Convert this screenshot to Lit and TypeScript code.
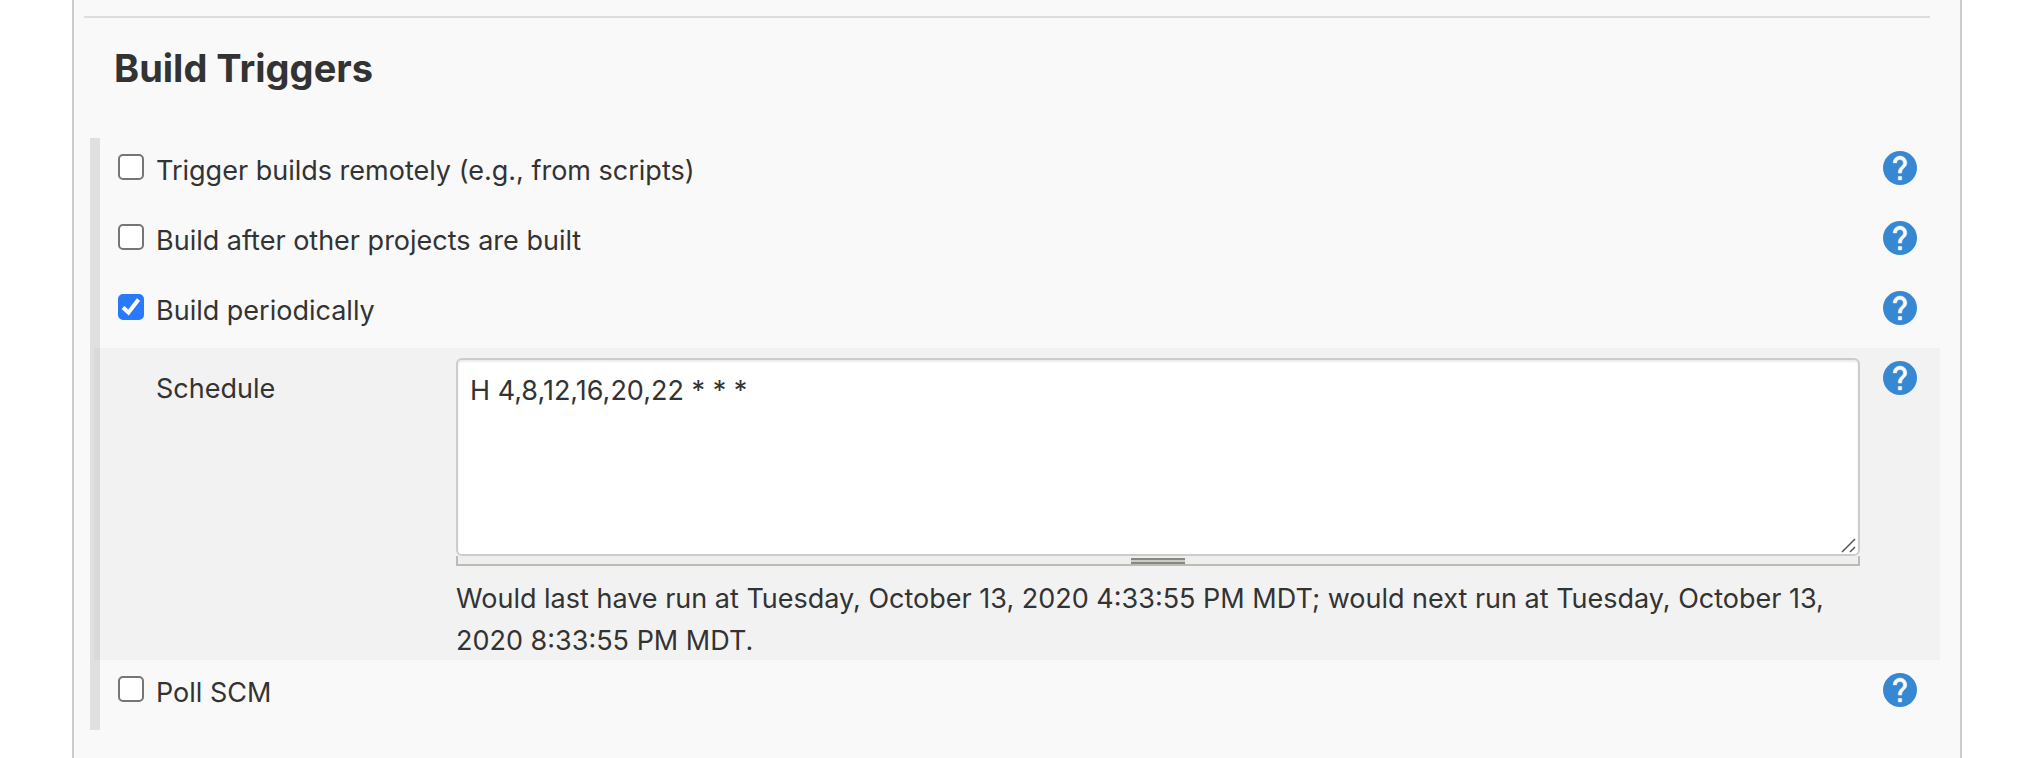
import { LitElement, html, css } from "lit";
import { customElement, property, state } from "lit/decorators.js";

@customElement("help-button")
class HelpButton extends LitElement {
  @property() topic = "";

  static styles = css`
    :host { display: block; }
    .help {
      display: block;
      width: 34px;
      height: 34px;
      padding: 0;
      border: 0;
      background: none;
      cursor: pointer;
    }
    .icon { display: block; width: 34px; height: 34px; }
  `;

  render() {
    return html`<button class="help" type="button" aria-label="Help for feature: ${this.topic}">
      <svg class="icon" viewBox="2 2 20 20" aria-hidden="true">
        <circle cx="12" cy="12" r="10" fill="#3788d2"/>
        <path fill="#f9f9f9" stroke="#f9f9f9" stroke-width="0.300" d="M13 19h-2v-2h2v2zm2.070-7.750l-.9.920C13.450 12.900 13 13.500 13 15h-2v-.5c0-1.100.450-2.100 1.170-2.830l1.240-1.260c.370-.360.590-.860.590-1.410 0-1.100-.9-2-2-2s-2 .9-2 2H8c0-2.210 1.790-4 4-4s4 1.790 4 4c0 .880-.360 1.680-.930 2.250z"/>
      </svg>
    </button>`;
  }
}

@customElement("app-root")
class AppRoot extends LitElement {
  @state() private checked: Record<string, boolean> = { periodic: true };

  static styles = css`
    :host {
      display: block;
      min-height: 100vh;
      background: #fff;
      color: #333;
      font-family: Inter, "Liberation Sans", sans-serif;
      font-size: 27px;
      line-height: 42px;
    }
    * { box-sizing: border-box; }
    .panel {
      min-height: 100vh;
      margin: 0 64px 0 72px;
      padding: 16px 20px 28px 10px;
      border: solid #ccc;
      border-width: 0 2px;
      background: #f9f9f9;
    }
    .rule {
      height: 2px;
      margin: 0 10px 0 0;
      border: 0;
      background: #ddd;
    }
    .title {
      margin: 0;
      padding: 26px 30px 46px;
      font-size: 38px;
      line-height: 48px;
      font-weight: 700;
    }
    .triggers {
      margin-left: 6px;
      border-left: 10px solid #e0e0e0;
    }
    .row {
      display: flex;
      align-items: flex-start;
      justify-content: space-between;
      min-height: 70px;
      padding: 12px 23px 0 18px;
    }
    .option {
      display: flex;
      align-items: flex-start;
      gap: 12px;
    }
    .box {
      appearance: none;
      flex: none;
      width: 26px;
      height: 26px;
      margin: 4px 0 0;
      border: 2px solid #767676;
      border-radius: 5px;
      background: #fff;
    }
    .box:checked {
      border-color: #2979ff;
      background: #2979ff url('data:image/svg+xml,<svg xmlns="http://www.w3.org/2000/svg" viewBox="0 0 26 26"><path d="M5 13.500L10.500 18.500L20.500 5.500" fill="none" stroke="white" stroke-width="4"/></svg>') border-box center / 26px 26px;
    }
    .row help-button { margin-top: 1px; }
    .schedule {
      display: grid;
      grid-template-columns: 300px minmax(0, 1fr) 34px;
      align-items: start;
      margin-left: -6px;
      padding: 10px 23px 0 62px;
      background: rgba(0, 0, 0, 0.027);
    }
    .label { padding-top: 10px; }
    .field { margin-right: 23px; }
    .schedule help-button { margin-top: 3px; }
    .editor { position: relative; }
    .text {
      display: block;
      width: 100%;
      height: 198px;
      padding: 10px 12px;
      border: 2px solid #ccc;
      border-radius: 6px;
      background: #fff;
      box-shadow: inset 0 2px 2px rgba(0, 0, 0, 0.075);
      color: inherit;
      font: inherit;
      resize: none;
      outline: 0;
    }
    .corner {
      position: absolute;
      right: 4px;
      bottom: 3px;
      width: 15px;
      height: 15px;
      pointer-events: none;
    }
    .handle {
      display: flex;
      justify-content: center;
      height: 10px;
      padding-top: 2px;
      border: solid #bbbbb3;
      border-width: 0 2px 2px;
      background: #eee;
    }
    .grip {
      width: 54px;
      height: 6px;
      border: solid #888880;
      border-width: 2px 0;
      background: #ccccc6;
    }
    .message { margin: 12px 0 -2px; }
  `;

  private row(id: string, text: string) {
    return html`<div class="row">
      <label class="option">
        <input class="box" type="checkbox" .checked=${!!this.checked[id]}
          @change=${(e: Event) => {
            this.checked = { ...this.checked, [id]: (e.target as HTMLInputElement).checked };
          }}>
        <span>${text}</span>
      </label>
      <help-button topic=${text}></help-button>
    </div>`;
  }

  render() {
    return html`<main class="panel">
      <hr class="rule">
      <h2 class="title">Build Triggers</h2>
      <section class="triggers">
        ${this.row("remote", "Trigger builds remotely (e.g., from scripts)")}
        ${this.row("after", "Build after other projects are built")}
        ${this.row("periodic", "Build periodically")}
        ${this.checked.periodic
          ? html`<div class="schedule">
              <label class="label" for="spec">Schedule</label>
              <div class="field">
                <div class="editor">
                  <textarea class="text" id="spec" spellcheck="false" .value=${"H 4,8,12,16,20,22 * * *"}></textarea>
                  <svg class="corner" viewBox="0 0 15 15" aria-hidden="true">
                    <path d="M1 14L14 1M9 14L14 9" stroke="#555" stroke-width="1.500" fill="none"/>
                  </svg>
                </div>
                <div class="handle"><div class="grip"></div></div>
                <p class="message">Would last have run at Tuesday, October 13, 2020 4:33:55 PM MDT; would next run at Tuesday, October 13, 2020 8:33:55 PM MDT.</p>
              </div>
              <help-button topic="Schedule"></help-button>
            </div>`
          : null}
        ${this.row("poll", "Poll SCM")}
      </section>
    </main>`;
  }
}
